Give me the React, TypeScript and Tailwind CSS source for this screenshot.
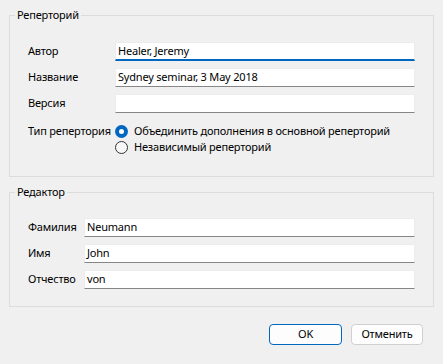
import type { ReactNode } from "react";

function Field({ value, focused }: { value: string; focused?: boolean }) {
  return (
    <div
      className={
        "flex-1 h-[19px] bg-white border border-[#ececec] flex items-center pl-[2px] " +
        (focused ? "border-b-2 border-b-[#0067c0]" : "border-b-[#868686]")
      }
    >
      {value}
    </div>
  );
}

function Row({ label, width, children }: { label: string; width: string; children: ReactNode }) {
  return (
    <div className="flex items-center">
      <span className={width + " whitespace-nowrap"}>{label}</span>
      {children}
    </div>
  );
}

function Radio({ checked, label }: { checked?: boolean; label: string }) {
  return (
    <div className="flex items-center h-4 gap-[6px]">
      {checked ? (
        <span className="w-[13px] h-[13px] rounded-full bg-[#0067c0] flex items-center justify-center">
          <span className="w-[5px] h-[5px] rounded-full bg-white" />
        </span>
      ) : (
        <span className="w-[13px] h-[13px] rounded-full border border-[#333] bg-[#f7f7f7]" />
      )}
      <span className="whitespace-nowrap">{label}</span>
    </div>
  );
}

function Group({ title, children, className }: { title: string; children: ReactNode; className?: string }) {
  return (
    <fieldset className={"border border-[#dcdcdc] " + (className ?? "")}>
      <legend className="ml-[5px] px-[2px] leading-4">{title}</legend>
      {children}
    </fieldset>
  );
}

export default function App() {
  return (
    <div className="w-[443px] h-[364px] bg-[#f0f0f0] px-[9px] pt-[7px] font-['Segoe_UI','Noto_Sans',sans-serif] text-[11px] tracking-[-0.2px] text-black">
      <Group title="Реперторий">
        <div className="px-[18px] pt-[19px] pb-[21px]">
          <div className="flex flex-col gap-[7px]">
            <Row label="Автор" width="w-[87px]">
              <Field value="Healer, Jeremy" focused />
            </Row>
            <Row label="Название" width="w-[87px]">
              <Field value="Sydney seminar, 3 May 2018" />
            </Row>
            <Row label="Версия" width="w-[87px]">
              <Field value="" />
            </Row>
          </div>
          <div className="flex mt-[10px]">
            <span className="w-[87px] leading-4 whitespace-nowrap">Тип репертория</span>
            <div className="flex flex-col">
              <Radio checked label="Объединить дополнения в основной реперторий" />
              <Radio label="Независимый реперторий" />
            </div>
          </div>
        </div>
      </Group>
      <Group title="Редактор" className="mt-[7px]">
        <div className="px-[18px] pt-[18px] pb-[17px] flex flex-col gap-[7px]">
          <Row label="Фамилия" width="w-[56px]">
            <Field value="Neumann" />
          </Row>
          <Row label="Имя" width="w-[56px]">
            <Field value="John" />
          </Row>
          <Row label="Отчество" width="w-[56px]">
            <Field value="von" />
          </Row>
        </div>
      </Group>
      <div className="flex justify-end gap-[9px] mt-[17px] mr-[11px]">
        <button className="w-[73px] h-[21px] rounded-[4px] border border-[#0067c0] bg-[#fdfdfd]">OK</button>
        <button className="w-[72px] h-[21px] rounded-[4px] border border-[#d0d0d0] bg-[#fdfdfd]">Отменить</button>
      </div>
    </div>
  );
}
